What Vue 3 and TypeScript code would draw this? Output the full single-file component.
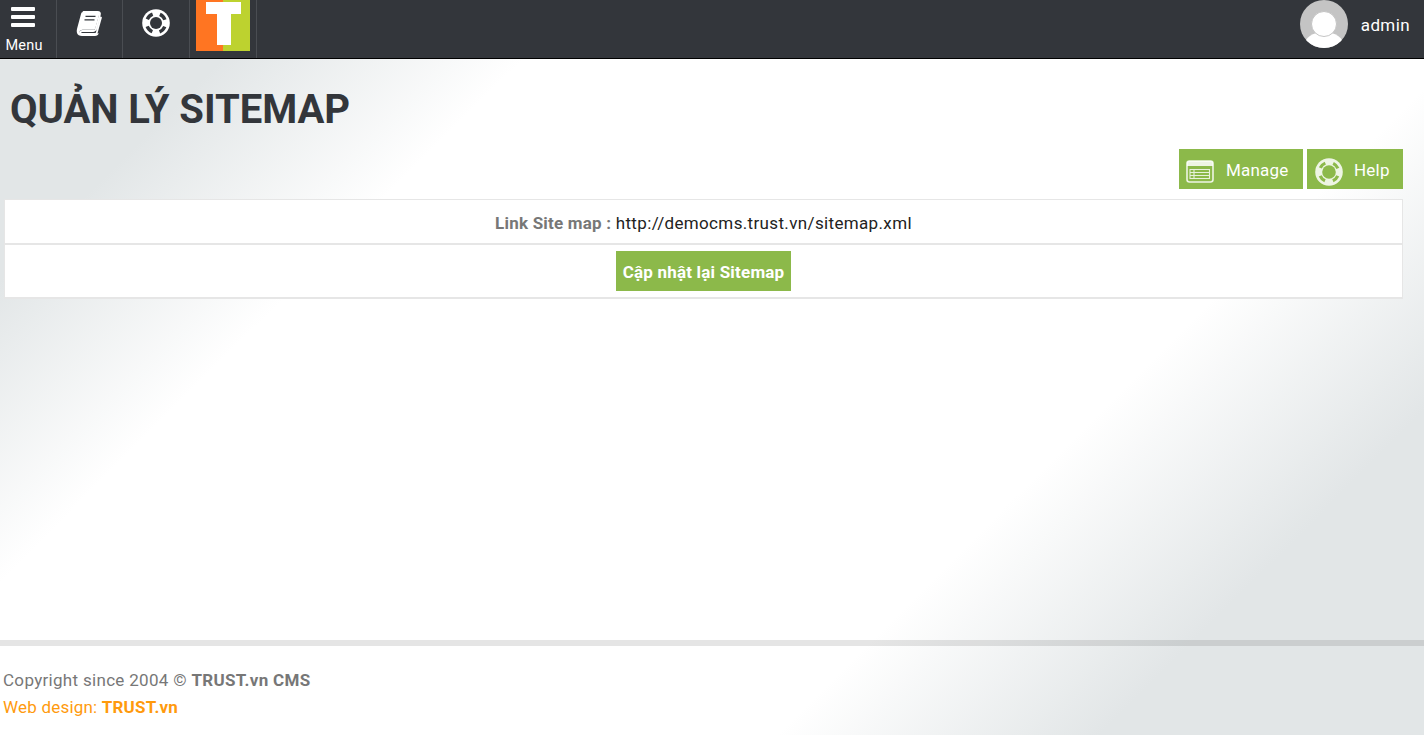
<script setup lang="ts">
const navIcons: string[] = ['book', 'ring']
</script>

<template>
  <div class="page">
    <header class="topbar">
      <div class="cell menu">
        <span class="burger"><i></i><i></i><i></i></span>
        <span class="menu-label">Menu</span>
      </div>
      <div v-for="n in navIcons" :key="n" class="cell icon-cell" :class="n">
        <svg v-if="n === 'book'" width="28" height="26" viewBox="0 0 28 26">
          <path d="M8.500 1H22.500C24.800 1 25.300 2.300 24.800 4L21 17.500C20.500 19.200 19.600 20 18 20H7.500C5.800 20 5.200 20.800 5.300 21.600 5.400 22.400 6.200 23 7.500 23H20C21 23 21.500 22.500 21.800 21.500L26 6.500" fill="none" stroke="#fff" stroke-width="1.800" stroke-linecap="round" stroke-linejoin="round"/>
          <path d="M8 1C6.800 1 6.300 1.800 6 3L2.500 16C1.800 18.800 1.500 20 2 22 2.500 24 4.500 25 7 25H20C22 25 23.200 24 23.700 22.300H7.500C5.500 22.300 4.500 21.800 4.500 21 4.500 19.800 5.800 18.800 7.500 18.800H18C19.300 18.800 20 18.200 20.400 17L24.200 3.500C24.600 2 24 1 22.500 1Z" fill="#fff"/>
          <path d="M10.500 5.300H20.500M9.500 8.800H19.500" stroke="#33363b" stroke-width="1.300"/>
        </svg>
        <svg v-else width="28" height="28" viewBox="0 0 28 28">
          <circle cx="14" cy="14" r="13.800" fill="#fff"/>
          <circle cx="14" cy="14" r="6" fill="#33363b"/>
          <circle cx="14" cy="14" r="9.500" fill="none" stroke="#33363b" stroke-width="3.400" stroke-dasharray="7.500 7.420" stroke-dashoffset="-3.700"/>
        </svg>
      </div>
      <div class="cell logo-cell">
        <div class="logo"><span class="t-top"></span><span class="t-stem"></span></div>
      </div>
      <div class="user">
        <svg class="avatar" width="48" height="48" viewBox="0 0 48 48">
          <defs><clipPath id="av"><circle cx="24" cy="24" r="24"/></clipPath></defs>
          <circle cx="24" cy="24" r="24" fill="#c4c4c4"/>
          <g clip-path="url(#av)">
            <ellipse cx="24" cy="46" rx="20" ry="14" fill="#fff"/>
            <circle cx="24" cy="24" r="12.500" fill="#fff" stroke="#c4c4c4" stroke-width="1"/>
          </g>
        </svg>
        <span class="admin">admin</span>
      </div>
    </header>

    <main class="main">
      <h1 class="title">QUẢN LÝ SITEMAP</h1>
      <div class="actions">
        <a class="action manage">
          <svg width="28" height="23" viewBox="0 0 28 23">
            <rect x="1" y="1" width="26" height="21" rx="2.500" fill="none" stroke="#fff" stroke-opacity=".85" stroke-width="1.600"/>
            <path d="M1 6V3.500C1 2 2 1 3.500 1h21C26 1 27 2 27 3.500V6z" fill="#fff" fill-opacity=".85"/>
            <path d="M4 9.500h19.500v9H4zM4 12.500h19.500M4 15.500h19.500M8 9.500v9" fill="none" stroke="#fff" stroke-opacity=".8" stroke-width="1.100"/>
          </svg>
          <span>Manage</span>
        </a>
        <a class="action help-btn">
          <svg width="28" height="28" viewBox="0 0 28 28">
            <circle cx="14" cy="14" r="13.800" fill="#fff" fill-opacity=".85"/>
            <circle cx="14" cy="14" r="6.800" fill="#8cb94a"/>
            <circle cx="14" cy="14" r="9.600" fill="none" stroke="#8cb94a" stroke-width="3.200" stroke-dasharray="7 8.080" stroke-dashoffset="-4"/>
          </svg>
          <span>Help</span>
        </a>
      </div>
      <div class="panel">
        <div class="row link-row">
          <b>Link Site map :</b>&nbsp;<span>http://democms.trust.vn/sitemap.xml</span>
        </div>
        <div class="row btn-row">
          <button class="update" type="button">Cập nhật lại Sitemap</button>
        </div>
      </div>
    </main>

    <footer class="footer">
      <div class="copy">Copyright since 2004 © <b>TRUST.vn CMS</b></div>
      <div class="web">Web design: <b>TRUST.vn</b></div>
    </footer>
  </div>
</template>

<style scoped>
.page {
  height: 735px;
  overflow: hidden;
  display: flex;
  flex-direction: column;
  font-family: Roboto, "Noto Sans", sans-serif;
  background: linear-gradient(135deg, #e2e6e7 0%, #e2e6e7 13%, #ffffff 27%, #ffffff 70%, #e2e6e7 85%, #e2e6e7 100%);
}
.topbar {
  height: 58px;
  flex: none;
  display: flex;
  background: #33363b;
  border-bottom: 1px solid #000;
}
.cell {
  border-right: 1px solid #4a4d52;
  height: 58px;
  box-sizing: border-box;
}
.menu {
  width: 57px;
  display: flex;
  flex-direction: column;
  align-items: center;
  padding-right: 10px;
  padding-top: 7px;
  box-sizing: border-box;
}
.burger {
  display: flex;
  flex-direction: column;
  gap: 4px;
}
.burger i {
  display: block;
  width: 24px;
  height: 4px;
  border-radius: 1px;
  background: #fff;
}
.menu-label {
  color: #fff;
  font-size: 14.500px;
  line-height: 17px;
  letter-spacing: 0.2px;
  margin: 10px 0 0 2px;
}
.icon-cell {
  width: 66px;
  display: flex;
  justify-content: center;
  padding-top: 11px;
}
.icon-cell.book {
  padding-right: 2px;
}
.icon-cell.ring {
  width: 67px;
  padding-top: 9px;
}
.logo-cell {
  width: 67px;
  padding-left: 6px;
}
.logo {
  position: relative;
  width: 54px;
  height: 51px;
  background: linear-gradient(90deg, #ff7522 50%, #bdd22f 50%);
}
.t-top {
  position: absolute;
  left: 10px;
  top: 2px;
  width: 35px;
  height: 12px;
  background: #fff;
}
.t-stem {
  position: absolute;
  left: 21px;
  top: 14px;
  width: 14px;
  height: 31px;
  background: #fff;
}
.user {
  margin-left: auto;
  display: flex;
  align-items: flex-start;
  padding-right: 14px;
}
.avatar {
  display: block;
}
.admin {
  color: #fff;
  font-size: 17px;
  line-height: 20px;
  letter-spacing: 0.4px;
  margin: 15px 0 0 13px;
}
.main {
  flex: 1;
  min-height: 0;
  padding: 0 21px 0 4px;
}
.title {
  margin: 0;
  padding: 27px 0 0 6px;
  font-size: 40px;
  line-height: 47px;
  font-weight: 700;
  letter-spacing: -0.05px;
  color: #33363b;
}
.actions {
  display: flex;
  justify-content: flex-end;
  gap: 4px;
  margin-top: 16px;
}
.action {
  height: 40px;
  display: flex;
  align-items: center;
  background: #8cb94a;
  color: #fff;
  font-size: 17px;
  letter-spacing: 0.2px;
  box-sizing: border-box;
}
.action svg {
  margin-top: 5px;
}
.action span {
  margin-top: 2px;
}
.manage {
  width: 124px;
  padding-left: 7px;
  gap: 12px;
}
.help-btn {
  width: 96px;
  padding-left: 8px;
  gap: 11px;
}
.panel {
  margin-top: 10px;
  border: 1px solid #e6e6e6;
  border-bottom: 0;
  background: #fff;
}
.row {
  display: flex;
  justify-content: center;
  border-bottom: 2px solid #e6e6e6;
}
.link-row {
  padding-top: 12px;
  height: 31px;
  font-size: 17px;
  line-height: 22px;
  letter-spacing: 0.35px;
  color: #222;
}
.link-row b {
  color: #777;
  font-weight: 700;
  letter-spacing: 0.2px;
}
.btn-row {
  height: 54px;
  padding-top: 6px;
  box-sizing: border-box;
}
.update {
  width: 175px;
  height: 40px;
  border: 0;
  padding: 2px 0 0;
  background: #8cb94a;
  color: #fff;
  font: 700 17px Roboto, sans-serif;
  letter-spacing: 0.2px;
}
.footer {
  flex: none;
  height: 95px;
  box-sizing: border-box;
  border-top: 6px solid rgba(0, 0, 0, 0.1);
  padding: 21px 3px 0;
  font-size: 17px;
  line-height: 27px;
}
.copy {
  color: #777;
  letter-spacing: 0.31px;
}
.web {
  color: #ff9a0d;
  letter-spacing: 0.2px;
}
</style>

<style>
body { margin: 0; }
</style>
